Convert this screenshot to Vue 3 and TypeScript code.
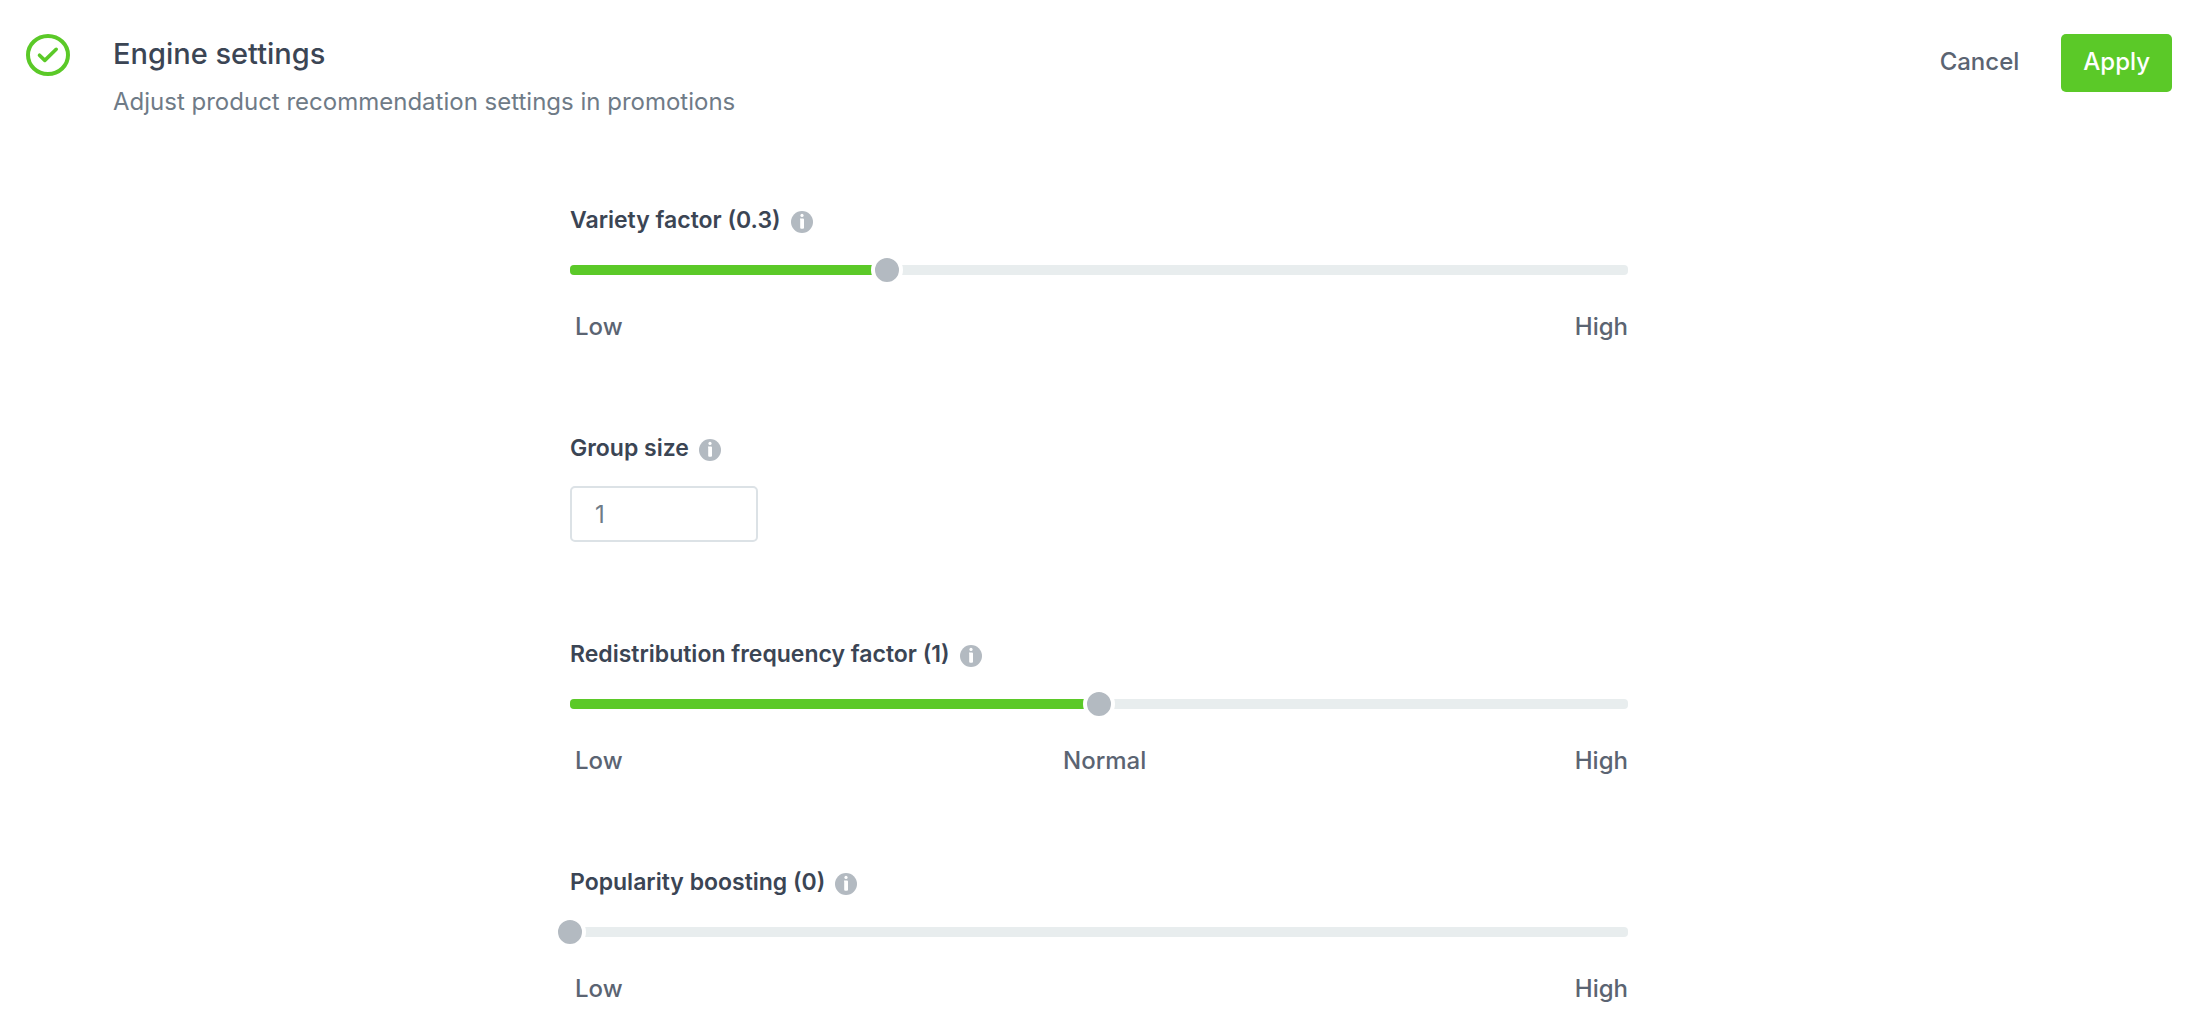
<script setup lang="ts">
import { reactive } from 'vue'

interface Setting {
  id: string
  kind: 'range' | 'number'
  label: string
  value: number
  max: number
  step: number
  marks: string[]
}

const settings = reactive<Setting[]>([
  { id: 'variety', kind: 'range', label: 'Variety factor', value: 0.3, max: 1, step: 0.1, marks: ['Low', 'High'] },
  { id: 'group-size', kind: 'number', label: 'Group size', value: 1, max: 100, step: 1, marks: [] },
  { id: 'redistribution', kind: 'range', label: 'Redistribution frequency factor', value: 1, max: 2, step: 0.1, marks: ['Low', 'Normal', 'High'] },
  { id: 'popularity', kind: 'range', label: 'Popularity boosting', value: 0, max: 1, step: 0.1, marks: ['Low', 'High'] },
])

const caption = (s: Setting) => (s.kind === 'range' ? `${s.label} (${s.value})` : s.label)
const fill = (s: Setting) => `${(s.value / s.max) * 100}%`
</script>

<template>
  <form class="page" @submit.prevent>
    <header class="header">
      <svg class="status" viewBox="0 0 44 42" fill="none" stroke="#5bc928" aria-hidden="true">
        <ellipse cx="22" cy="21" rx="20" ry="19" stroke-width="4" />
        <path d="M13.5 21.2 18.8 26.4 30.2 15.3" stroke-width="3.6" stroke-linecap="round" stroke-linejoin="round" />
      </svg>
      <div class="heading">
        <h1>Engine settings</h1>
        <p>Adjust product recommendation settings in promotions</p>
      </div>
      <div class="actions">
        <button type="button" class="cancel">Cancel</button>
        <button type="submit" class="apply">Apply</button>
      </div>
    </header>

    <main class="fields">
      <section v-for="s in settings" :key="s.id" class="field" :class="s.kind">
        <div class="caption">
          <label :for="s.id">{{ caption(s) }}</label>
          <svg class="info" viewBox="0 0 22 22" aria-hidden="true">
            <circle cx="11" cy="11" r="11" fill="#b3bac1" />
            <circle cx="11" cy="4.4" r="1.6" fill="#fff" />
            <path d="M9 7.4h3a1 1 0 0 1 1 1v8.4a1 1 0 0 1-1 1h-1.8a1 1 0 0 1-1-1V8.6H9z" fill="#fff" />
          </svg>
        </div>
        <template v-if="s.kind === 'range'">
          <div class="slider">
            <div class="track"><div class="fill" :style="{ width: fill(s) }"></div></div>
            <input :id="s.id" v-model.number="s.value" type="range" min="0" :max="s.max" :step="s.step" />
          </div>
          <div class="marks">
            <span v-for="m in s.marks" :key="m">{{ m }}</span>
          </div>
        </template>
        <input v-else :id="s.id" v-model.number="s.value" class="box" type="number" min="1" :max="s.max" />
      </section>
    </main>
  </form>
</template>

<style>
body {
  background: #fff;
}
</style>

<style scoped>
.page {
  padding: 34px 22px 0 26px;
  font-family: Inter, "Liberation Sans", sans-serif;
  font-size: 24px;
  line-height: 32px;
  font-weight: 500;
  color: #3b4554;
}
.header {
  display: flex;
  align-items: flex-start;
}
.status {
  width: 44px;
  height: 42px;
  margin-right: 43px;
  flex: none;
}
.heading {
  flex: 1;
}
h1 {
  margin: 0 0 12px;
  font-size: 29px;
  line-height: 40px;
  font-weight: 500;
}
p {
  margin: 0;
  font-weight: 400;
  color: #6f7b87;
}
.actions {
  display: flex;
  gap: 20px;
}
button {
  height: 58px;
  padding: 0 22px 2px;
  border: 0;
  border-radius: 5px;
  font: inherit;
  cursor: pointer;
}
.cancel {
  background: none;
  color: #5b6472;
}
.apply {
  background: #5bc928;
  color: #fff;
}
.fields {
  display: flex;
  flex-direction: column;
  gap: 89px;
  max-width: 1058px;
  margin: 86px auto 0;
}
.number {
  padding-bottom: 7px;
}
.caption {
  display: flex;
  align-items: center;
  gap: 10px;
  font-size: 23px;
  font-weight: 600;
}
.info {
  width: 22px;
  height: 22px;
  margin-top: 4px;
}
.slider {
  position: relative;
  display: flex;
  align-items: center;
  height: 24px;
  margin: 22px 0 29px;
}
.track {
  flex: 1;
  height: 10px;
  border-radius: 4px;
  background: #e8edee;
  overflow: hidden;
}
.fill {
  height: 100%;
  background: #5bc928;
}
.slider input {
  position: absolute;
  top: -4px;
  left: -16px;
  width: calc(100% + 32px);
  height: 32px;
  margin: 0;
  appearance: none;
  background: none;
}
.slider input::-webkit-slider-thumb {
  appearance: none;
  box-sizing: border-box;
  width: 32px;
  height: 32px;
  border: 4px solid #fff;
  border-radius: 50%;
  background: #b3bac1;
}
.marks {
  display: flex;
  justify-content: space-between;
  color: #5b6472;
}
.marks span:first-child {
  padding-left: 5px;
}
.marks span:not(:first-child):not(:last-child) {
  padding-left: 12px;
}
.box {
  display: block;
  box-sizing: border-box;
  width: 188px;
  height: 56px;
  margin-top: 22px;
  padding: 0 23px;
  border: 2px solid #dce2e6;
  border-radius: 5px;
  font: inherit;
  font-weight: 400;
  color: #6f7b87;
  appearance: textfield;
}
</style>
